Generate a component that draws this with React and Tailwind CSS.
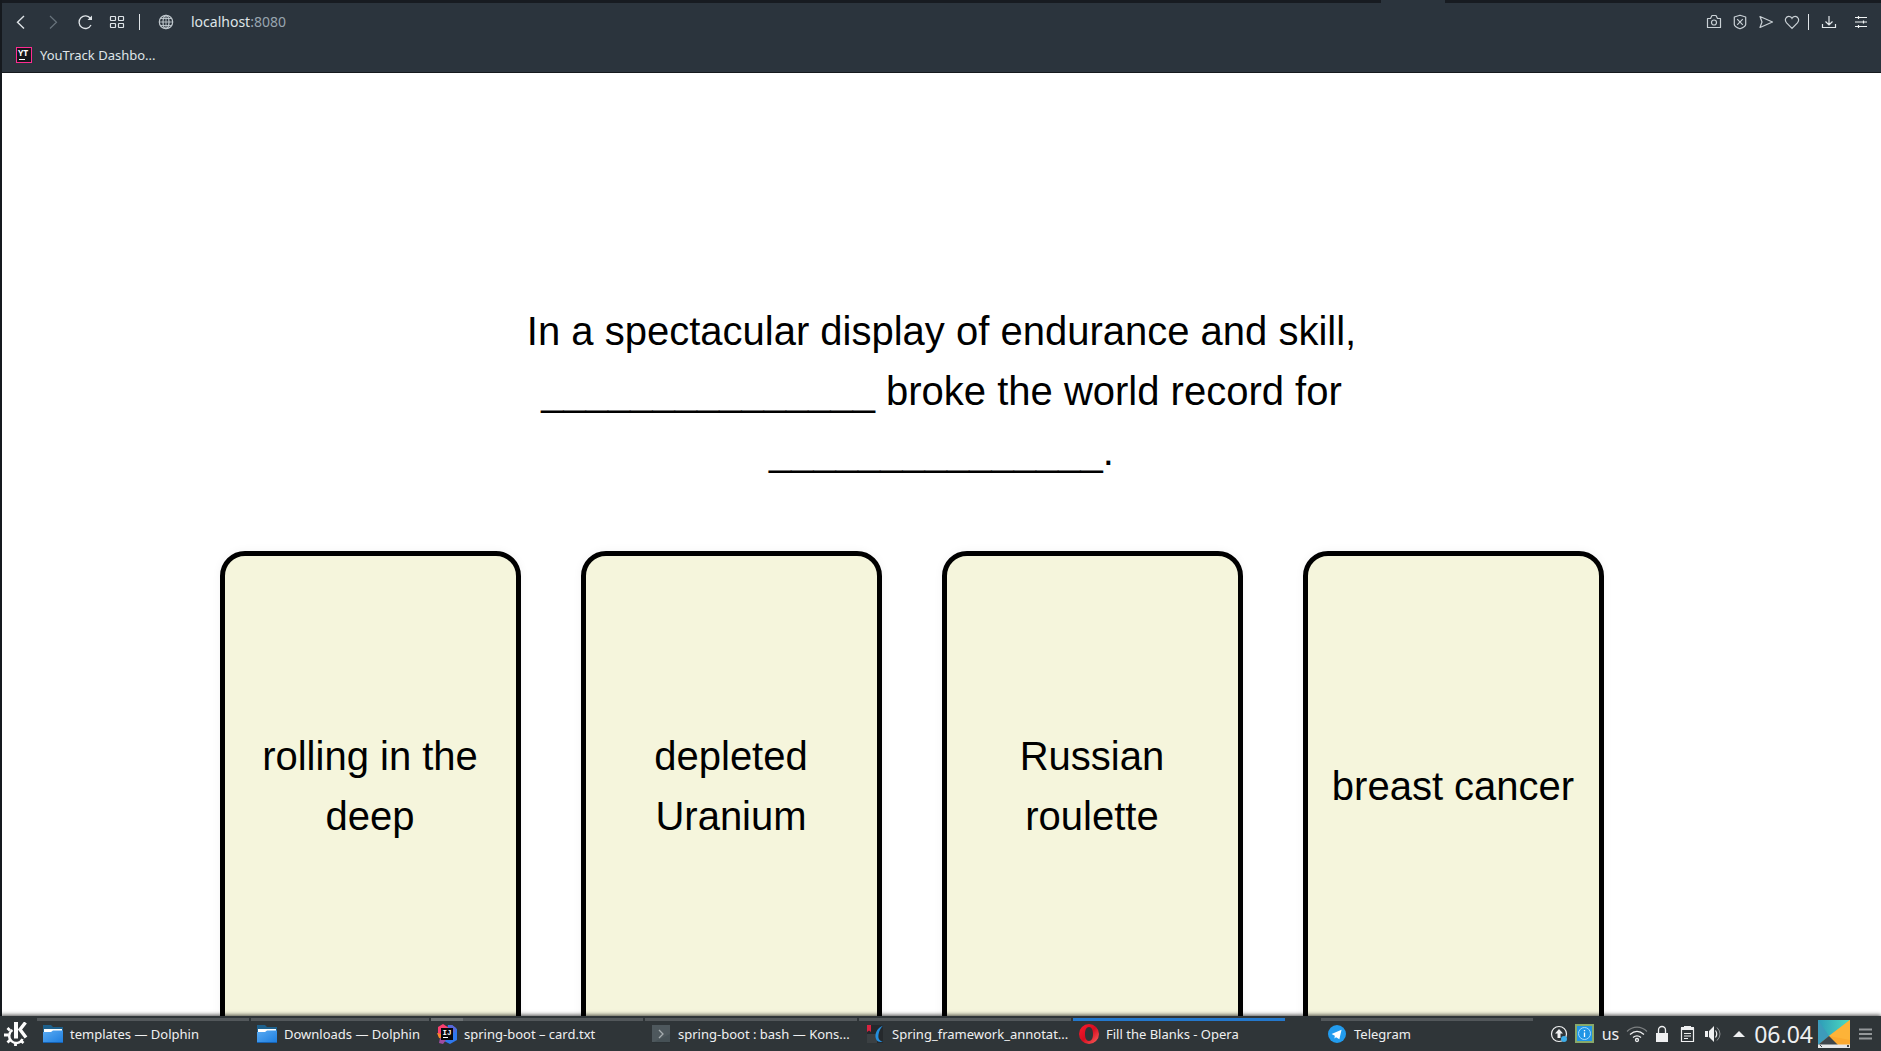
import React from "react";

const BLANK = "_______________";
const CARDS = ["rolling in the deep", "depleted Uranium", "Russian roulette", "breast cancer"];

function Line({ w = 16, h = 16, children, className = "" }) {
  return (
    <svg width={w} height={h} viewBox={`0 0 ${w} ${h}`} fill="none" stroke="currentColor" strokeWidth="1.2" className={`shrink-0 ${className}`} aria-hidden="true">
      {children}
    </svg>
  );
}

function IconButton({ label, children, className = "" }) {
  return (
    <button type="button" aria-label={label} className={`flex shrink-0 items-center justify-center ${className}`}>
      {children}
    </button>
  );
}

function BrowserHeader() {
  return (
    <header className="shrink-0 border-b border-[#15191e] bg-[#2b343d] text-[#dfe4e8]">
      <div className="flex h-[3px] justify-end bg-[#171b21] pr-[436px]">
        <div className="w-16 bg-[#2b343d]" />
      </div>
      <div className="flex h-[38px] items-center justify-between pr-3 pl-[11px]">
        <div className="flex items-center">
          <nav className="flex items-center gap-4" aria-label="Navigation">
            <IconButton label="Back"><Line><path d="M11 2 4.500 8.200 11 14.500" strokeWidth="1.4" /></Line></IconButton>
            <IconButton label="Forward" className="text-[#68737c]"><Line><path d="M5 2 11.500 8.200 5 14.500" /></Line></IconButton>
            <IconButton label="Reload">
              <Line>
                <path d="M14 11A6.300 6.300 0 1 1 13.500 4.500" strokeWidth="1.300" />
                <path d="M15 1.500v4.500h-4.500z" fill="currentColor" stroke="none" />
              </Line>
            </IconButton>
            <IconButton label="Speed dial">
              <Line>
                <rect x="1.500" y="2.500" width="5" height="4" rx=".5" />
                <rect x="9.500" y="2.500" width="5" height="4" rx=".5" />
                <rect x="1.500" y="9.500" width="5" height="4" rx=".5" />
                <rect x="9.500" y="9.500" width="5" height="4" rx=".5" />
              </Line>
            </IconButton>
          </nav>
          <div className="ml-[14px] h-4 w-px bg-[#dfe4e8]" />
          <IconButton label="Site information" className="ml-[18px] text-[#c0c8ce]">
            <Line>
              <circle cx="8" cy="8" r="6.700" />
              <ellipse cx="8" cy="8" rx="3" ry="6.700" />
              <path d="M8 1.300v13.400M1.300 8h13.400M2.500 4.500h11M2.500 11.500h11" strokeWidth=".9" />
            </Line>
          </IconButton>
          <a href="#address" className="ml-[17px] text-[14px] leading-5">localhost<span className="text-[#98a5b0]">:8080</span></a>
        </div>
        <div className="flex items-center text-[#c9d0d5]">
          <div className="flex items-center gap-[10px]">
            <IconButton label="Snapshot">
              <Line>
                <path d="M1.500 4.500h3l1.500-3h4l1.500 3h3v9h-13z" strokeLinejoin="round" />
                <circle cx="8" cy="8.500" r="2.500" />
              </Line>
            </IconButton>
            <IconButton label="Ad blocker">
              <Line>
                <path d="M8 1.200 13.700 3v7.500q0 2-5.700 4.300-5.700-2.300-5.700-4.300V3z" strokeLinejoin="round" />
                <path d="m5.200 5.200 5.600 5.600m0-5.600-5.600 5.600" />
              </Line>
            </IconButton>
            <IconButton label="Send"><Line><path d="M2 2.500 14.500 8 2 13.500 4 8z" strokeLinejoin="round" /></Line></IconButton>
            <IconButton label="Favourite"><Line><path d="M8 14.300 2.600 8.800C-.2 5.500 2.500 2 5.200 2.300 6.500 2.400 7.500 3.300 8 4.300c.5-1 1.500-1.900 2.800-2 2.700-.3 5.400 3.200 2.600 6.500z" /></Line></IconButton>
          </div>
          <div className="ml-2 h-4 w-px bg-[#dfe4e8]" />
          <IconButton label="Downloads" className="ml-3 text-[#e3e8eb]"><Line><path d="M8 2v9M4.500 7.500 8 11l3.500-3.500M1.500 10v3.500h13V10" /></Line></IconButton>
          <IconButton label="Easy setup" className="ml-4 text-[#f1f4f5]"><Line><path d="M2 3.500h12M2 8h12M2 12.500h12M5.500 2v3M10.500 6.500v3M5.500 11v3" /></Line></IconButton>
        </div>
      </div>
      <div className="flex h-[31px] items-start pt-1 pl-[14px]">
        <a href="#youtrack" className="flex items-center gap-2 text-[13px] leading-5">
          <svg width="16" height="16" viewBox="0 0 16 16" aria-hidden="true">
            <rect x=".5" y=".5" width="15" height="15" fill="#15171b" stroke="#ff2b92" />
            <text x="2" y="9" fill="#fff" fontFamily="Noto Sans" fontSize="8.500" fontWeight="700">YT</text>
            <path d="M3 12.500h6" stroke="#fff" />
          </svg>
          YouTrack Dashbo...
        </a>
      </div>
    </header>
  );
}

function Game() {
  return (
    <main className="min-h-0 flex-1 overflow-hidden bg-white pt-[228px] font-['Liberation_Sans',sans-serif] text-[40px] leading-[60px] text-black">
      <p className="mx-auto max-w-[900px] text-center">
        In a spectacular display of endurance and skill, {BLANK} broke the world record for {BLANK}.
      </p>
      <div className="mt-[70px] flex justify-center">
        {CARDS.map((text) => (
          <button key={text} type="button" className="mr-[60px] flex h-[500px] w-[301px] shrink-0 items-center justify-center rounded-[25px] border-5 border-black bg-[#f5f5dc] px-5 pt-5 pb-[50px] text-center shadow-[0_0_10px_rgba(0,0,0,0.05)]">
            {text}
          </button>
        ))}
      </div>
    </main>
  );
}

function FolderIcon() {
  return (
    <svg width="20" height="18" viewBox="0 0 20 18" aria-hidden="true">
      <defs><linearGradient id="folder" x1="0" y1="0" x2="1" y2="1"><stop stopColor="#5aabf2" /><stop offset="1" stopColor="#1c7de0" /></linearGradient></defs>
      <path d="M0 0h8l2 2h10v9H0z" fill="#1d608c" />
      <path d="M1 4h18v4H1z" fill="#fff" />
      <path d="M0 7h8l2-1.500h10V18H0z" fill="url(#folder)" />
      <path d="M0 17.500h20" stroke="#1562b4" />
    </svg>
  );
}

function IdeaIcon() {
  return (
    <svg width="20" height="20" viewBox="0 0 20 20" aria-hidden="true">
      <path d="M11 1h4l5 4v11l-7 4-6-3z" fill="#2f78ee" />
      <path d="M12 1h3l4 3-1 5-6-3z" fill="#5a66d8" />
      <path d="M1 3 6 0l6 4-7 9-4-1z" fill="#fb3f70" />
      <path d="m0 9 4 1 2 5-4-1z" fill="#f98a2b" />
      <path d="m2 19 1-5 6 2-3 4z" fill="#a04ca0" />
      <rect x="4" y="4" width="12" height="12" fill="#08080b" />
      <text x="5.500" y="10.500" fill="#fff" fontFamily="Liberation Mono" fontSize="7.500" fontWeight="700">IJ</text>
      <path d="M6 13.500h5" stroke="#fff" />
    </svg>
  );
}

function KonsoleIcon() {
  return (
    <svg width="18" height="18" viewBox="0 0 18 18" aria-hidden="true">
      <rect width="18" height="18" fill="#465156" />
      <path d="M0 0h18v9L0 18z" fill="#4e585d" />
      <path d="m7 5 4 4-4 4" fill="none" stroke="#a6adb0" strokeWidth="1.300" />
      <path d="M0 17.500h18" stroke="#2b3235" />
    </svg>
  );
}

function OkularIcon() {
  return (
    <svg width="18" height="20" viewBox="0 0 18 20" aria-hidden="true">
      <path d="M1 1h16v18H1z" fill="#25292c" />
      <path d="M1 10h10v9H1z" fill="#3b4043" />
      <path d="M1 1h4v7L3 6.500 1 8z" fill="#d92340" />
      <path d="M17 1.500C11 4 7.500 11 10.500 16c1.200 2 4.500 2.500 6.500 1.500-4-.5-5-3-4.500-7C13 7 14.500 4 17 1.500z" fill="#248ede" />
    </svg>
  );
}

function OperaIcon() {
  return (
    <svg width="20" height="20" viewBox="0 0 20 20" aria-hidden="true">
      <defs><linearGradient id="opera" x1="0" y1="0" x2="1" y2="1"><stop stopColor="#ff1b2d" /><stop offset=".5" stopColor="#d60d20" /><stop offset="1" stopColor="#ff6660" /></linearGradient></defs>
      <path fillRule="evenodd" fill="url(#opera)" d="M10 0a10 10 0 1 1 0 20 10 10 0 0 1 0-20zm0 3c-2.700 0-4 3-4 7s1.300 7 4 7 4-3 4-7-1.300-7-4-7z" />
    </svg>
  );
}

function TelegramIcon() {
  return (
    <svg width="18" height="18" viewBox="0 0 19 19" aria-hidden="true">
      <circle cx="9.500" cy="9.500" r="9.500" fill="#229cee" />
      <path d="M3.800 9.500 14.300 5 12 15l-3.500-2-1.700 1.300.4-3z" fill="#fff" />
    </svg>
  );
}

function Task({ icon, label, className = "", bar = "bg-[#53585b]", overlap = false }) {
  return (
    <button type="button" className={`flex shrink-0 flex-col pt-[2px] text-left ${className}`}>
      <span className={`block h-[3px] w-full ${bar}`}>{overlap && <span className="block h-full w-8 bg-[#6d7274]" />}</span>
      <span className="flex flex-1 items-center gap-[7px] pb-1 pl-[6px] whitespace-nowrap">
        <span className="flex w-5 justify-center">{icon}</span>
        {label}
      </span>
    </button>
  );
}

function Tray() {
  return (
    <div className="flex shrink-0 items-center pr-[9px] text-[#eff0f1]">
      <IconButton label="Updates">
        <svg width="18" height="18" viewBox="0 0 18 18" aria-hidden="true">
          <circle cx="9" cy="9" r="7.500" fill="none" stroke="currentColor" strokeWidth="1.200" />
          <path d="m9 4 4 4.500h-2.500V13h-3V8.500H5z" fill="currentColor" />
          <circle cx="14" cy="14" r="3" fill="#3daee9" />
        </svg>
      </IconButton>
      <IconButton label="Information" className="ml-[7px]">
        <svg width="19" height="19" viewBox="0 0 19 19" aria-hidden="true">
          <rect x="1" y="1" width="17" height="17" fill="#1f96e6" stroke="#88a96a" strokeWidth="2" />
          <circle cx="9.500" cy="9.500" r="6" fill="none" stroke="#a6dcff" />
          <path d="M9.500 8.500v4.500M9.500 6v1.300" stroke="#fff" strokeWidth="1.300" />
        </svg>
      </IconButton>
      <button type="button" aria-label="Keyboard layout us" className="ml-2 text-[16px] leading-5">us</button>
      <IconButton label="Wi-Fi" className="ml-[7px]">
        <svg width="22" height="18" viewBox="0 0 22 18" fill="none" stroke="currentColor" strokeWidth="1.300" aria-hidden="true">
          <path d="M1 6.500c6-5.800 14-5.800 20 0" opacity=".4" />
          <path d="M4 9.500c4.500-4 9.500-4 14 0M7 12.500c2.800-2.300 5.200-2.300 8 0" />
          <circle cx="11" cy="15" r="1.500" />
        </svg>
      </IconButton>
      <IconButton label="Vault" className="ml-2">
        <svg width="12" height="18" viewBox="0 0 12 18" aria-hidden="true">
          <path d="M2.500 9V5a3.500 3.500 0 0 1 7 0v4" fill="none" stroke="currentColor" strokeWidth="1.300" />
          <path d="M0 8h12v9H0z" fill="currentColor" />
        </svg>
      </IconButton>
      <IconButton label="Clipboard" className="ml-3">
        <svg width="15" height="18" viewBox="0 0 15 18" fill="none" stroke="currentColor" aria-hidden="true">
          <path d="M1.500 3v13.500h12V3" strokeWidth="1.200" />
          <path d="M1 2h3V1h7v1h3v3H1z" fill="currentColor" stroke="none" />
          <path d="M4 8.500h7M4 11h7M4 13.500h4" />
        </svg>
      </IconButton>
      <IconButton label="Volume" className="ml-[10px]">
        <svg width="18" height="18" viewBox="0 0 18 18" aria-hidden="true">
          <path d="M0 6h3v6H0zM4 6l5-5v16l-5-5z" fill="currentColor" />
          <path d="M10.500 5.500q2.500 3.500 0 7" fill="none" stroke="currentColor" strokeWidth="1.200" />
          <path d="M12 2.500q6 6.500 0 13" fill="none" stroke="currentColor" opacity=".5" />
        </svg>
      </IconButton>
      <IconButton label="Show hidden icons" className="ml-[10px]">
        <svg width="12" height="6" viewBox="0 0 12 6" aria-hidden="true"><path d="M0 6 6 0l6 6z" fill="currentColor" /></svg>
      </IconButton>
      <time className="ml-[9px] text-[23px] leading-7">06.04</time>
      <IconButton label="Show desktop" className="ml-[5px]">
        <svg width="32" height="28" viewBox="0 0 32 28" aria-hidden="true">
          <defs><linearGradient id="desk" x1="0" y1="0" x2="1" y2="0"><stop stopColor="#2e9bb8" /><stop offset="1" stopColor="#4ddcc0" /></linearGradient></defs>
          <path d="M0 0h32v28H0z" fill="#fba92f" />
          <path d="M0 0h32L11 16 0 25z" fill="url(#desk)" />
          <path d="M32 0v20L11 16z" fill="#fdb338" />
          <path d="m0 0 11 16L0 25z" fill="#3d9bbb" />
          <path d="m11 16 9 9H0z" fill="#3f464b" />
          <path d="M0 24.500h32V28H0z" fill="#e6e8e9" />
          <path d="M2 25h1v1h1v1H3v-1H2zM29 25h2v2h-2z" fill="#43484b" />
        </svg>
      </IconButton>
      <IconButton label="Panel menu" className="ml-[9px] text-[#94989a]">
        <svg width="13" height="12" viewBox="0 0 13 12" aria-hidden="true"><path d="M0 1.500h13M0 6h13M0 10.500h13" stroke="currentColor" strokeWidth="2" /></svg>
      </IconButton>
    </div>
  );
}

function LauncherIcon() {
  return (
    <svg width="24" height="24" viewBox="0 0 24 24" fill="none" stroke="#fcfcfc" aria-hidden="true">
      <path d="M8.500 8A7 7 0 1 0 18.500 17" strokeWidth="2.400" />
      <path d="M6 8.500 3.500 6M4.500 13H0M6 18l-2.500 2.500M11.500 20v4M16.500 18.500l3 2.500" strokeWidth="2.800" />
      <path d="M12 0v16.500" strokeWidth="4" />
      <path d="M21.500.5 16 7.500l6 8" strokeWidth="3.400" />
    </svg>
  );
}

function Taskbar() {
  return (
    <footer className="relative flex h-[35px] shrink-0 justify-between bg-[#2f3538] text-[13px] leading-5 text-[#eff0f1] shadow-[0_-1px_4px_rgba(0,0,0,0.7)]">
      <div className="flex min-w-0">
        <IconButton label="Application launcher" className="w-[37px] pr-[5px]">
          <LauncherIcon />
        </IconButton>
        <div className="flex gap-[2px]">
          <Task className="w-[212px]" icon={<FolderIcon />} label="templates — Dolphin" />
          <Task className="w-[178px]" icon={<FolderIcon />} label="Downloads — Dolphin" />
          <Task className="w-[212px]" icon={<IdeaIcon />} label="spring-boot – card.txt" overlap />
          <Task className="w-[212px]" icon={<KonsoleIcon />} label="spring-boot : bash — Kons..." />
          <Task className="w-[212px]" icon={<OkularIcon />} label="Spring_framework_annotat..." />
          <Task className="w-[212px]" icon={<OperaIcon />} label="Fill the Blanks - Opera" bar="bg-[#2478cc]" />
          <Task className="ml-[34px] w-[212px]" icon={<TelegramIcon />} label="Telegram" />
        </div>
      </div>
      <Tray />
    </footer>
  );
}

export default function App() {
  return (
    <div className="flex h-screen flex-col overflow-hidden font-['Noto_Sans',sans-serif]">
      <div className="flex min-h-0 flex-1 flex-col border-l-2 border-[#15191e]">
        <BrowserHeader />
        <Game />
      </div>
      <Taskbar />
    </div>
  );
}
